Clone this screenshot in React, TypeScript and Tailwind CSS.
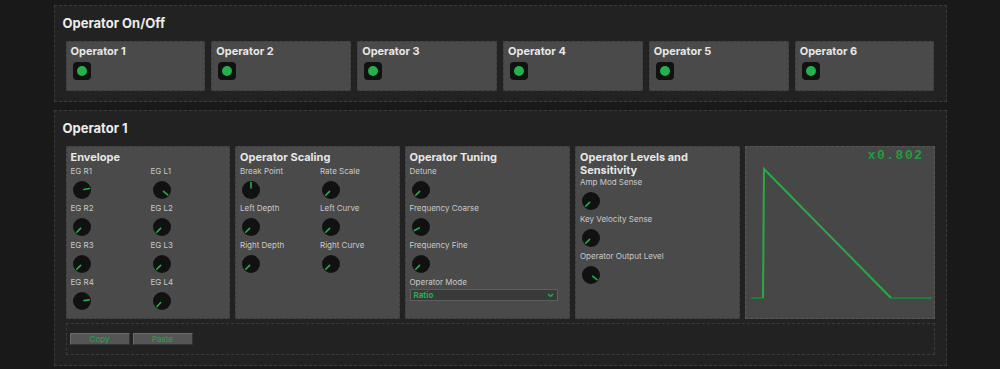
import React from "react"

const FONT = "font-['Inter','Liberation_Sans',sans-serif]"

function Knob({ angle }: { angle: number }) {
  const rad = (angle * Math.PI) / 180
  const x1 = 9 + Math.sin(rad) * 2
  const y1 = 9 - Math.cos(rad) * 2
  const x2 = 9 + Math.sin(rad) * 7.5
  const y2 = 9 - Math.cos(rad) * 7.5
  return (
    <svg width="18" height="18" viewBox="0 0 18 18" className="block">
      <circle cx="9" cy="9" r="9" fill="#111111" />
      <line x1={x1} y1={y1} x2={x2} y2={y2} stroke="#22b14c" strokeWidth="1.6" strokeLinecap="round" />
    </svg>
  )
}

function Control({ label, angle }: { label: string; angle: number }) {
  return (
    <div className="flex flex-col">
      <div className="text-[8px] leading-[10px] text-[#c9c9c9]">{label}</div>
      <div className="mt-[5px] mb-[4px] ml-[2px]">
        <Knob angle={angle} />
      </div>
    </div>
  )
}

function Panel({
  title,
  children,
  className = "",
  titleClass = "mb-[2px]",
}: {
  title: React.ReactNode
  children: React.ReactNode
  className?: string
  titleClass?: string
}) {
  return (
    <div className={`bg-[#4a4a4a] border border-dashed border-[#3c3c3c] px-[4px] pt-[4px] ${className}`}>
      <div className={`text-[11px] leading-[13px] font-bold text-[#e6e6e6] ${titleClass}`}>{title}</div>
      {children}
    </div>
  )
}

const operators = ["Operator 1", "Operator 2", "Operator 3", "Operator 4", "Operator 5", "Operator 6"]

export default function App() {
  return (
    <div className={`min-h-[369px] bg-[#191919] pt-[5px] ${FONT}`}>
      <div className="w-[893px] mx-auto flex flex-col gap-[8px]">
        {/* on/off */}
        <div className="bg-[#222222] border border-dashed border-[#3a3a3a] px-[11px] pt-[10px] pb-[10px]">
          <div className="text-[13px] leading-[14px] font-bold text-[#ececec] mb-[11px] ml-[-3px]">Operator On/Off</div>
          <div className="grid grid-cols-6 gap-[6px]">
            {operators.map((op) => (
              <div key={op} className="h-[50px] bg-[#4a4a4a] border border-dashed border-[#3c3c3c] px-[4px] pt-[3px]">
                <div className="text-[11px] leading-[13px] font-bold text-[#e6e6e6]">{op}</div>
                <div className="mt-[4px] ml-[2px] w-[18px] h-[18px] rounded-[4px] bg-[#111111] flex items-center justify-center">
                  <div className="w-[10px] h-[10px] rounded-full bg-[#22b14c]" />
                </div>
              </div>
            ))}
          </div>
        </div>

        {/* operator 1 */}
        <div className="bg-[#222222] border border-dashed border-[#3a3a3a] px-[11px] pt-[10px] pb-[10px]">
          <div className="text-[13px] leading-[14px] font-bold text-[#ececec] mb-[11px] ml-[-3px]">Operator 1</div>
          <div className="flex gap-[5px] h-[173px]">
            <Panel title="Envelope" className="w-[165px]">
              <div className="grid grid-cols-[80px_1fr]">
                <Control label="EG R1" angle={78} />
                <Control label="EG L1" angle={130} />
                <Control label="EG R2" angle={-135} />
                <Control label="EG L2" angle={-135} />
                <Control label="EG R3" angle={-135} />
                <Control label="EG L3" angle={-135} />
                <Control label="EG R4" angle={80} />
                <Control label="EG L4" angle={-138} />
              </div>
            </Panel>
            <Panel title="Operator Scaling" className="w-[165px]">
              <div className="grid grid-cols-[80px_1fr]">
                <Control label="Break Point" angle={0} />
                <Control label="Rate Scale" angle={-135} />
                <Control label="Left Depth" angle={-135} />
                <Control label="Left Curve" angle={-135} />
                <Control label="Right Depth" angle={-135} />
                <Control label="Right Curve" angle={-135} />
              </div>
            </Panel>
            <Panel title="Operator Tuning" className="w-[166px]">
              <Control label="Detune" angle={-135} />
              <Control label="Frequency Coarse" angle={-118} />
              <Control label="Frequency Fine" angle={-135} />
              <div className="text-[8px] leading-[10px] text-[#c9c9c9]">Operator Mode</div>
              <div className="mt-[2px] w-[148px] h-[12px] bg-[#3a3a3a] border border-[#5e5e5e] flex items-center justify-between px-[3px]">
                <span className="text-[8px] font-bold text-[#22b14c] leading-none">Ratio</span>
                <svg width="7" height="5" viewBox="0 0 7 5">
                  <path d="M1 1 L3.5 3.5 L6 1" fill="none" stroke="#22b14c" strokeWidth="1.2" />
                </svg>
              </div>
            </Panel>
            <Panel title={<>Operator Levels and<br />Sensitivity</>} className="w-[165px]" titleClass="mb-0">
              <Control label="Amp Mod Sense" angle={-135} />
              <Control label="Key Velocity Sense" angle={-135} />
              <Control label="Operator Output Level" angle={128} />
            </Panel>
            <div className="relative w-[190px] bg-[#474747] border border-dashed border-[#565656]">
              <svg width="190" height="173" viewBox="0 0 190 173" className="block">
                <polyline points="5,151 17,151" fill="none" stroke="#1c7f35" strokeWidth="2" />
                <polyline points="17,151 18,22 145,151" fill="none" stroke="#2aa845" strokeWidth="2" />
                <polyline points="145,151 186,151" fill="none" stroke="#1c7f35" strokeWidth="2" />
              </svg>
              <div className="absolute top-[2px] right-[10px] font-['Liberation_Mono',monospace] text-[13px] font-bold leading-[14px] tracking-[1.5px] text-[#239c3f]">
                x0.802
              </div>
            </div>
          </div>
          <div className="mt-[4px] h-[32px] border border-dashed border-[#3c3c3c] flex items-center gap-[3px] px-[3px]">
            <button className="w-[60px] h-[12px] bg-[#555555] border border-t-[#6a6a6a] border-l-[#6a6a6a] border-b-[#333333] border-r-[#333333] text-[8px] leading-none text-[#22a845]">
              Copy
            </button>
            <button className="w-[60px] h-[12px] bg-[#555555] border border-t-[#6a6a6a] border-l-[#6a6a6a] border-b-[#333333] border-r-[#333333] text-[8px] leading-none text-[#22a845]">
              Paste
            </button>
          </div>
        </div>
      </div>
    </div>
  )
}
